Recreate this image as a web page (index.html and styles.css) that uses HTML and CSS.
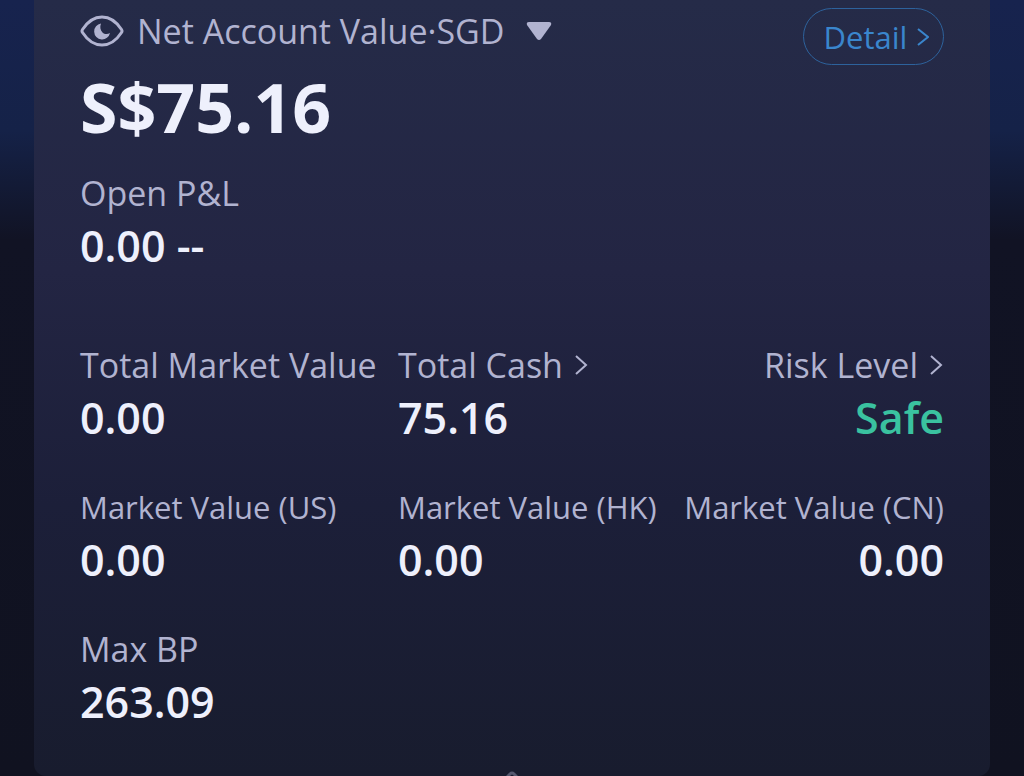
FILE: index.html
```html
<!DOCTYPE html>
<html lang="en">
<head>
<meta charset="utf-8">
<meta name="viewport" content="width=device-width, initial-scale=1">
<title>Account</title>
<link rel="stylesheet" href="styles.css">
</head>
<body>
<main class="card">
  <header class="top">
    <div class="title">
      <button class="plain eye" aria-label="Hide values"><svg width="44" height="32" viewBox="0 0 44 32" fill="none"><path d="M2.500 14.500C8 6 14 2 22 2s14 4 19.500 12.500q1 1.500 0 3C36 26 30 30 22 30S8 26 2.500 17.500q-1-1.500 0-3Z" stroke="currentColor" stroke-width="3"/><path d="M21 8.500a8 8 0 1 0 9 9.500c-2.500 1.600-5.500 1.400-7.500-.5-2.300-2.300-2.800-5.700-1.500-9Z" fill="currentColor"/></svg></button>
      <button class="plain currency">Net Account Value·SGD <svg width="26" height="20" viewBox="0 0 26 20" fill="currentColor"><path d="M3 1h20q3 0 2 3L15 18q-2 2-4 0L1 4Q0 1 3 1Z"/></svg></button>
    </div>
    <button class="detail">Detail <svg width="12" height="18" viewBox="0 0 12 18" fill="none" stroke="currentColor" stroke-width="2"><path d="m1 1 10 8-10 8"/></svg></button>
  </header>
  <p class="total">S$75.16</p>
  <section class="pl">
    <h2 class="label">Open P&amp;L</h2>
    <p class="value">0.00 --</p>
  </section>
  <section class="grid">
    <div class="cell"><h2 class="label">Total Market Value</h2><p class="value">0.00</p></div>
    <div class="cell"><button class="plain label">Total Cash <svg width="14" height="20" viewBox="0 0 14 20" fill="none" stroke="currentColor" stroke-width="2"><path d="m1 1 10 9-10 9"/></svg></button><p class="value">75.16</p></div>
    <div class="cell end"><button class="plain label">Risk Level <svg width="14" height="20" viewBox="0 0 14 20" fill="none" stroke="currentColor" stroke-width="2"><path d="m1 1 10 9-10 9"/></svg></button><p class="value safe">Safe</p></div>
    <div class="cell"><h2 class="label small">Market Value (US)</h2><p class="value">0.00</p></div>
    <div class="cell"><h2 class="label small">Market Value (HK)</h2><p class="value">0.00</p></div>
    <div class="cell end"><h2 class="label small">Market Value (CN)</h2><p class="value">0.00</p></div>
    <div class="cell"><h2 class="label">Max BP</h2><p class="value">263.09</p></div>
  </section>
  <button class="plain collapse" aria-label="Collapse"><svg width="12" height="5" viewBox="0 0 12 5" fill="none" stroke="currentColor" stroke-width="3"><path d="M1 6 4 3q2-2 4 0l3 3"/></svg></button>
</main>
</body>
</html>
```
FILE: styles.css
```css
* { box-sizing: border-box; margin: 0; padding: 0; }
body {
  min-height: 100vh;
  padding: 0 34px;
  background: linear-gradient(#17234e 0, #152248 130px, #111324 240px, #101220 100%);
  font-family: "Open Sans", "Noto Sans", sans-serif;
  color: #eef0fc;
}
.card {
  display: flex; flex-direction: column;
  min-height: 100vh;
  padding: 8px 46px 0;
  background: linear-gradient(#252b48, #232543 35%, #1c1f39 65%, #181c2e);
  border-radius: 0 0 12px 12px;
}
.plain { background: none; border: 0; color: #b1b3d0; font: inherit; cursor: pointer; }
.top { display: flex; justify-content: space-between; align-items: flex-start; }
.title { display: flex; align-items: center; gap: 13px; height: 46px; }
.eye { display: flex; }
.currency { display: flex; align-items: center; gap: 22px; font-size: 34px; line-height: 46px; }
.detail {
  display: flex; align-items: center; justify-content: center; gap: 10px;
  width: 141px; height: 57px; padding-left: 6px;
  border: 1px solid #2d629c; border-radius: 29px;
  background: none; color: #3a86cd; font: inherit; font-size: 31px; cursor: pointer;
}
.total { font-size: 68px; font-weight: 700; line-height: 84px; }
.pl { margin-top: 20px; }
.label { display: flex; align-items: center; gap: 12px; color: #b1b3d0; font-size: 34px; font-weight: 400; line-height: 48px; white-space: nowrap; }
.small { font-size: 31px; }
.value { font-size: 43px; font-weight: 600; line-height: 57px; }
.grid { display: grid; grid-template-columns: 318px auto auto; row-gap: 37px; margin-top: 67px; }
.end { display: flex; flex-direction: column; align-items: flex-end; }
.safe { color: #3ac2a0; }
.collapse { display: flex; align-self: center; margin-top: auto; color: #55586f; }
```
